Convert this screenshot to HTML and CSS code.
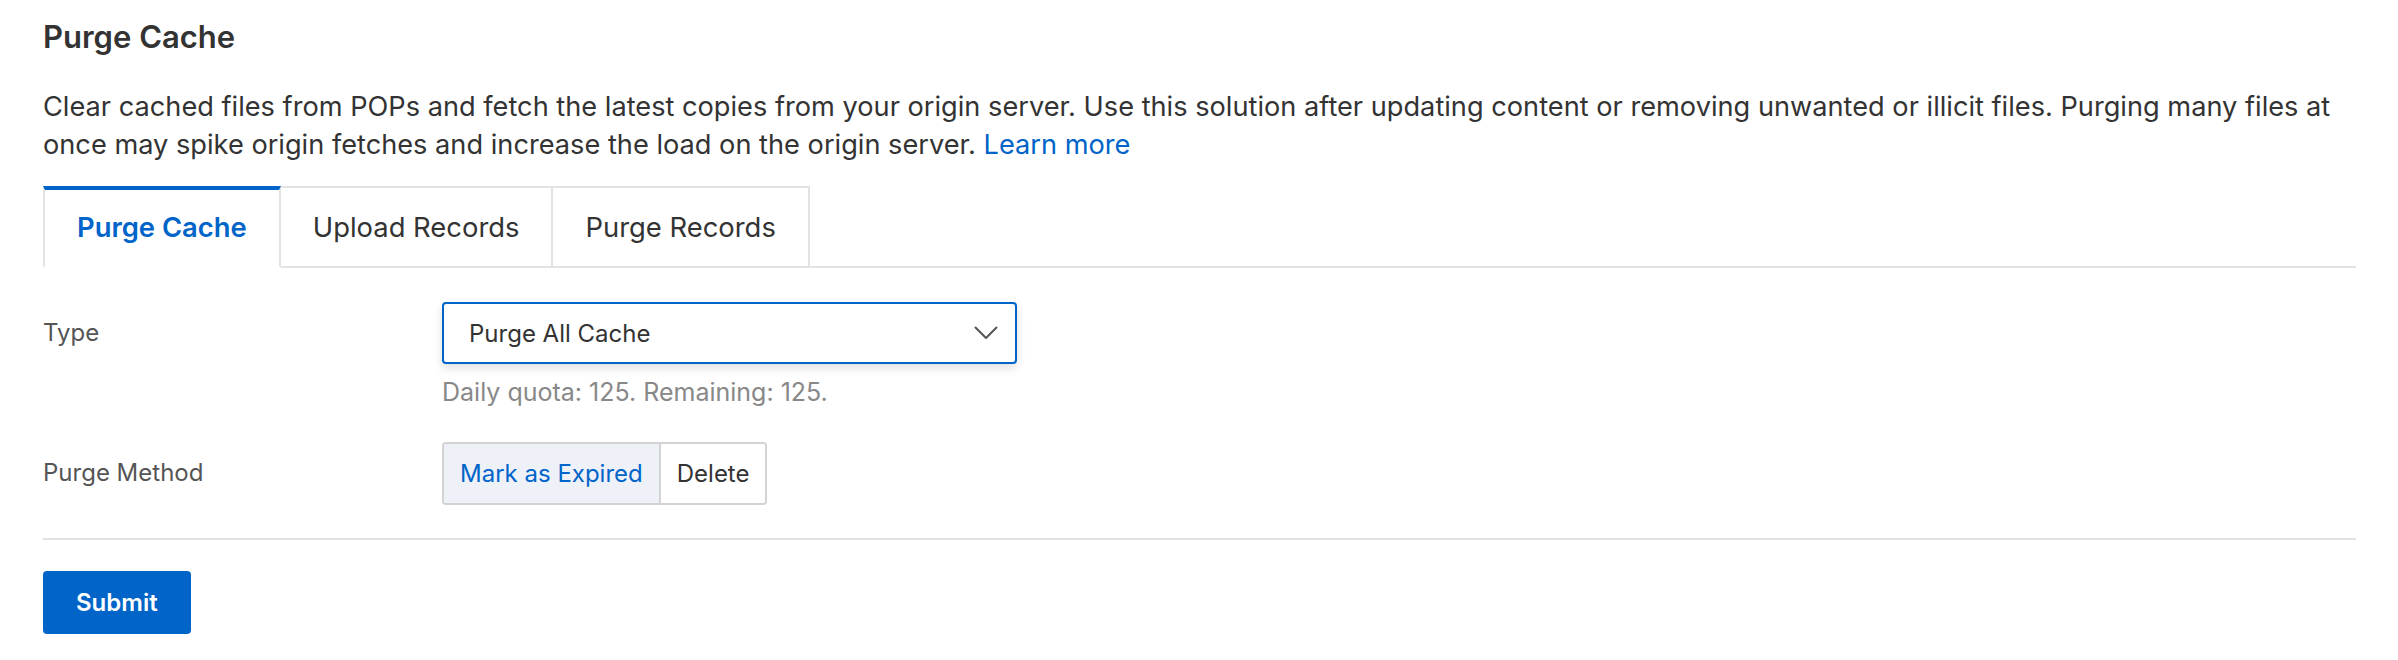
FILE: index.html
```html
<!DOCTYPE html>
<html lang="en">
<head>
<meta charset="utf-8">
<title>Purge Cache</title>
<link rel="stylesheet" href="styles.css">
</head>
<body>
<div class="page">
  <h1 class="title">Purge Cache</h1>
  <p class="desc"><span>Clear cached files from POPs and fetch the latest copies from your origin server. Use this solution after updating content or removing unwanted or illicit files. Purging many files at once may spike origin fetches and increase the load on the origin server.</span> <a class="link" href="#">Learn more</a></p>

  <div class="tabs">
    <div class="tab active">Purge Cache</div>
    <div class="tab">Upload Records</div>
    <div class="tab">Purge Records</div>
    <div class="tab-fill"></div>
  </div>

  <div class="form">
    <div class="row">
      <div class="label">Type</div>
      <div class="control">
        <div class="select">
          <span class="select-value">Purge All Cache</span>
          <svg class="chevron" width="24" height="14" viewBox="0 0 24 14" aria-hidden="true">
            <path d="M1.5 1.5 L12 12 L22.5 1.5" fill="none" stroke="#555" stroke-width="2" stroke-linecap="round" stroke-linejoin="round"/>
          </svg>
        </div>
        <div class="help">Daily quota: 125. Remaining: 125.</div>
      </div>
    </div>
    <div class="row">
      <div class="label">Purge Method</div>
      <div class="control">
        <div class="seg-group">
          <div class="seg selected">Mark as Expired</div>
          <div class="seg">Delete</div>
        </div>
      </div>
    </div>
  </div>

  <div class="divider"></div>

  <button class="submit" type="button">Submit</button>
</div>
</body>
</html>
```

FILE: styles.css
```css
* {
  box-sizing: border-box;
}

html, body {
  margin: 0;
  padding: 0;
  background: #ffffff;
}

body {
  font-family: Inter, "Noto Sans", "Liberation Sans", sans-serif;
  color: #333333;
  font-size: 24px;
}

.page {
  padding: 0 42px 0 43px;
}

.title {
  margin: 17px 0 0;
  font-size: 31px;
  line-height: 40px;
  font-weight: 600;
  color: #333333;
}

.desc {
  margin: 31px 0 0;
  font-size: 27.2px;
  line-height: 38px;
  color: #333333;
}

.link {
  color: #0064c8;
  text-decoration: none;
}

.tabs {
  display: flex;
  margin-top: 22px;
  height: 82px;
}

.tab {
  display: flex;
  align-items: center;
  padding: 0 32px;
  font-size: 27.4px;
  color: #333333;
  background: #ffffff;
  border-top: 2px solid #e3e3e3;
  border-right: 2px solid #e3e3e3;
  border-bottom: 2px solid #e3e3e3;
}

.tab.active {
  color: #0064c8;
  font-weight: 600;
  border-top: 4px solid #0064c8;
  border-left: 2px solid #e3e3e3;
  border-bottom: 2px solid transparent;
  padding-bottom: 2px;
}

.tab-fill {
  flex: 1;
  border-bottom: 2px solid #e3e3e3;
}

.form {
  margin-top: 34px;
}

.row {
  display: flex;
  align-items: flex-start;
  margin-bottom: 32px;
}

.row:last-child {
  margin-bottom: 0;
}

.label {
  width: 399px;
  flex: none;
  line-height: 62px;
  color: #555555;
}

.control {
  display: flex;
  flex-direction: column;
}

.select {
  width: 575px;
  height: 62px;
  display: flex;
  align-items: center;
  justify-content: space-between;
  padding: 0 17px 0 25px;
  border: 2px solid #0064c8;
  border-radius: 4px;
  background: #ffffff;
  box-shadow: 0 4px 10px rgba(0, 0, 0, 0.13);
  color: #333333;
}

.chevron {
  display: block;
}

.help {
  margin-top: 10px;
  font-size: 25px;
  line-height: 36px;
  color: #888888;
}

.seg-group {
  display: flex;
  height: 63px;
  border: 2px solid #d3d3d3;
  border-radius: 4px;
  overflow: hidden;
}

.seg {
  display: flex;
  align-items: center;
  padding: 0 16px;
  background: #ffffff;
  color: #333333;
}

.seg + .seg {
  border-left: 2px solid #d3d3d3;
}

.seg.selected {
  background: #eef1f8;
  color: #0064c8;
}

.divider {
  margin-top: 33px;
  height: 2px;
  background: #e3e3e3;
}

.submit {
  margin-top: 31px;
  height: 63px;
  padding: 0 33px;
  border: none;
  border-radius: 4px;
  background: #0064c8;
  color: #ffffff;
  font-family: inherit;
  font-size: 24px;
  font-weight: 600;
  cursor: pointer;
}
```
